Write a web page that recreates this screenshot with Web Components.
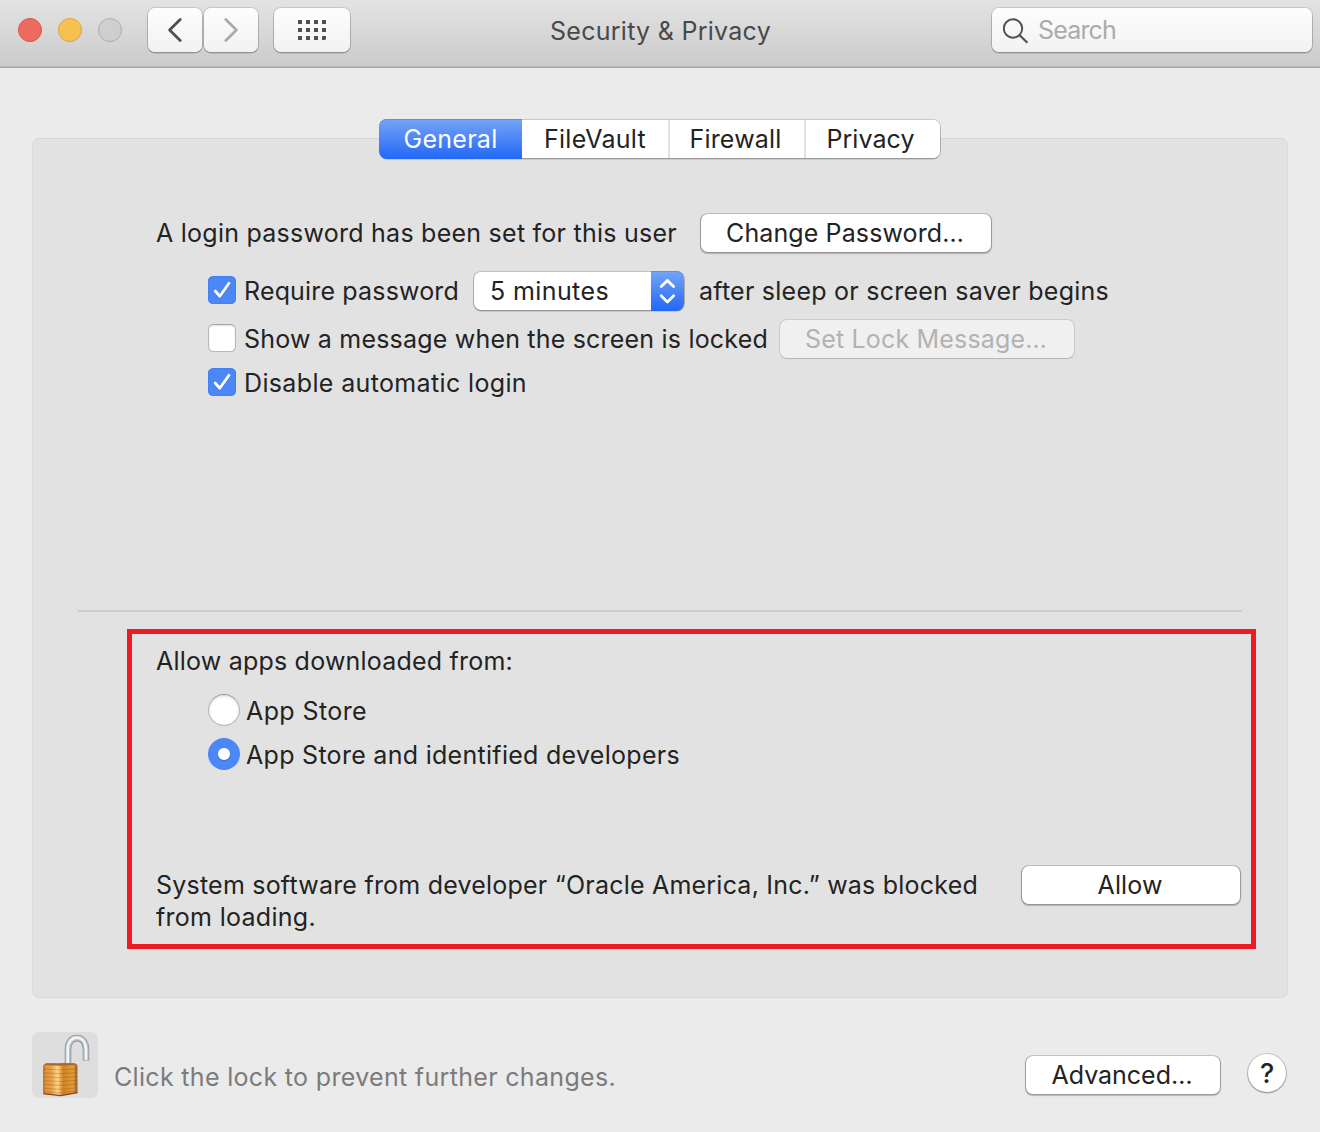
<!DOCTYPE html>
<html lang="en">
<head>
<meta charset="utf-8">
<title>Security &amp; Privacy</title>
<style>
html, body { margin: 0; height: 1132px; overflow: hidden; }
body { background: #ebebeb; color: #232323; font: 25px/30px Inter, "Liberation Sans", sans-serif; }
</style>
</head>
<body>
<pref-window></pref-window>
<script>
function define(name, html, setup) {
  const template = document.createElement('template');
  template.innerHTML = html;
  customElements.define(name, class extends HTMLElement {
    constructor() {
      super();
      this.attachShadow({ mode: 'open' }).appendChild(template.content.cloneNode(true));
    }
    connectedCallback() { if (setup) setup(this, this.shadowRoot); }
  });
}

/* One line of text, tracked so that it fills the width given in "w". */
define('fit-text', `<style>
:host { display: block; flex: none; line-height: 30px; height: 30px; }
span { display: block; width: max-content; white-space: nowrap; }
</style><span><slot></slot></span>`, (el, root) => {
  const w = parseFloat(el.getAttribute('w'));
  const span = root.querySelector('span');
  span.style.letterSpacing = '0px';
  const spacing = (w - span.getBoundingClientRect().width) / el.textContent.length;
  span.style.letterSpacing = spacing.toFixed(3) + 'px';
  el.style.width = w + 'px';
});

define('traffic-lights', `
<style>
:host { display: flex; gap: 16px; }
i { box-sizing: border-box; width: 24px; height: 24px; border-radius: 50%; border: 1px solid #d9534a; background: #ed6b60; }
i:nth-of-type(2) { background: #f6c150; border-color: #dea33b; }
i:nth-of-type(3) { background: #cfcfcf; border-color: #adadad; }
</style><i></i><i></i><i></i>`);

define('tool-button', `
<style>
:host { display: flex; align-items: center; justify-content: center; box-sizing: border-box; width: 54px; height: 44px; border-radius: 7px;
  background: linear-gradient(#fdfdfd, #f2f2f2); box-shadow: 0 0 0 1px rgba(0,0,0,.11), 0 1px 0 .5px rgba(0,0,0,.2); }
:host([wide]) { width: 76px; }
</style><slot></slot>`);

define('search-field', `
<style>
:host { display: flex; align-items: center; box-sizing: border-box; width: 320px; height: 44px; padding-left: 11px; gap: 8px; border-radius: 7px; color: #ababab;
  background: linear-gradient(#fdfdfd, #f2f2f2); box-shadow: 0 0 0 1px rgba(0,0,0,.11), 0 1px 0 .5px rgba(0,0,0,.2); }
svg { display: block; margin-top: 2px; }
</style>
<svg width="27" height="27" viewBox="0 0 27 27" fill="none" stroke="#505050"><circle cx="10" cy="10.5" r="9.2" stroke-width="1.9"/><path d="M16.7 17.2L24.4 24.7" stroke-width="2.2"/></svg>
<slot></slot>`);

define('title-bar', `
<style>
:host { display: grid; grid-template-columns: 1fr auto 1fr; box-sizing: border-box; height: 68px; padding: 8px 8px 0 18px; background: linear-gradient(#e3e3e3, #cbcbcb); border-bottom: 1px solid #a4a4a4; box-shadow: inset 0 -1px #b9b9b9; }
.left { display: flex; height: 44px; align-items: center; }
.nav { display: flex; gap: 2px; margin: 0 16px 0 26px; }
.title { padding: 8px 0 0 0; margin-left: -9px; color: #494949; }
search-field { justify-self: end; }
svg { display: block; }
</style>
<div class="left">
  <traffic-lights></traffic-lights>
  <div class="nav">
    <tool-button><svg width="54" height="44" viewBox="0 0 54 44" fill="none" stroke="#505050" stroke-width="2.8" stroke-linecap="round" stroke-linejoin="round"><path d="M32.2 11.5L21.6 22l10.6 10.5"/></svg></tool-button>
    <tool-button><svg width="54" height="44" viewBox="0 0 54 44" fill="none" stroke="#ababab" stroke-width="2.8" stroke-linecap="round" stroke-linejoin="round"><path d="M21.8 11.5L32.4 22 21.8 32.5"/></svg></tool-button>
  </div>
  <tool-button wide><svg width="28" height="20" viewBox="0 0 28 20" fill="#505050"><path d="M0 0h4v4H0zM8 0h4v4H8zM16 0h4v4h-4zM24 0h4v4h-4zM0 8h4v4H0zM8 8h4v4H8zM16 8h4v4h-4zM24 8h4v4h-4zM0 16h4v4H0zM8 16h4v4H8zM16 16h4v4h-4zM24 16h4v3l-1 1h-3z"/></svg></tool-button>
</div>
<div class="title"><fit-text w="221">Security &amp; Privacy</fit-text></div>
<search-field><fit-text w="78">Search</fit-text></search-field>`);

define('tab-item', `
<style>
:host { display: flex; align-items: center; justify-content: center; box-sizing: border-box; height: 38px; background: #fff; border-left: 2px solid #e2e2e2; padding-right: 3px; }
:host(.first) { border-left: 0; padding: 0; }
:host(.last) { padding-right: 5px; }
:host([selected]) { padding: 0; color: #fff; border: 0; height: 40px; margin: -1px 0 -1px -1px; border-radius: 8px 0 0 8px; background: linear-gradient(#76a5f6, #2267f6); box-shadow: inset 0 1px #5a8ef0; }
</style><slot></slot>`, el => { el.style.width = el.getAttribute('size') + 'px'; });

define('tab-bar', `
<style>
:host { display: flex; width: 560px; border-radius: 7px; background: #fff; box-shadow: 0 0 0 1px rgba(0,0,0,.15), 0 1px 0 .5px rgba(0,0,0,.2); }
tab-item:last-of-type { border-radius: 0 7px 7px 0; }
</style>
<tab-item selected size="143"><fit-text w="94">General</fit-text></tab-item>
<tab-item class="first" size="146"><fit-text w="102">FileVault</fit-text></tab-item>
<tab-item size="136"><fit-text w="92">Firewall</fit-text></tab-item>
<tab-item class="last" size="136"><fit-text w="88">Privacy</fit-text></tab-item>`);

define('push-button', `
<style>
:host { display: flex; flex: none; align-items: center; justify-content: center; box-sizing: border-box; height: 38px; padding-right: 2px; border-radius: 7px; background: #fff; color: #232323;
  box-shadow: 0 0 0 1px rgba(0,0,0,.15), 0 1px 1px .5px rgba(0,0,0,.22); }
:host([disabled]) { color: #b2b2b2; background: #f0f0f0; box-shadow: 0 0 0 1px rgba(0,0,0,.1), 0 1px 1px rgba(0,0,0,.1); }
:host([round]) { height: 38px; padding: 2px 0 0; border-radius: 50%; font-size: 27px; font-weight: 500; }
</style><slot></slot>`, el => { el.style.width = el.getAttribute('size') + 'px'; });

define('check-box', `
<style>
:host { display: flex; flex: none; align-items: center; height: 30px; gap: 8px; }
i { display: block; box-sizing: border-box; width: 28px; height: 28px; margin-top: -2px; border-radius: 5.5px; background: #fff; border: 1px solid #b9b9b9; border-top-color: #a3a3a3; box-shadow: inset 0 1px 2px rgba(0,0,0,.12); }
svg { display: none; }
:host([checked]) i { border: 0; background: #4b87f6; box-shadow: inset 0 0 0 1px #4480f0; }
:host([checked]) svg { display: block; }
</style>
<i><svg width="28" height="28" viewBox="0 0 28 28" fill="none" stroke-linecap="round" stroke-linejoin="round"><path d="M7.2 15.9L11.8 21 21 8.2" stroke="#2f67cf" stroke-opacity=".4" stroke-width="2.8"/><path d="M7.2 15L11.8 20.2 21 7.3" stroke="#fff" stroke-width="2.8"/></svg></i><slot></slot>`);

define('radio-button', `
<style>
:host { display: flex; align-items: center; height: 32px; gap: 6px; }
i { display: flex; align-items: center; justify-content: center; box-sizing: border-box; width: 32px; height: 32px; border-radius: 50%; background: #fff; border: 1px solid #b6b6b6; border-top-color: #9d9d9d; box-shadow: inset 0 1px 3px rgba(0,0,0,.16); }
:host([checked]) i { border: 0; background: #4b87f6; box-shadow: none; }
:host([checked]) i::after { content: ""; width: 11.5px; height: 11.5px; border-radius: 50%; background: #fff; box-shadow: 0 1px 1px rgba(20,60,160,.4); }
slot { display: block; padding-top: 2px; }
</style><i></i><slot></slot>`);

define('popup-select', `
<style>
:host { display: flex; flex: none; align-items: center; justify-content: space-between; box-sizing: border-box; width: 209.5px; height: 38px; padding-left: 16px; border-radius: 7px; background: #fff;
  box-shadow: 0 0 0 1px rgba(0,0,0,.15), 0 1px 0 .5px rgba(0,0,0,.22); }
b { height: 40px; width: 33px; margin: -1px -.5px -1px 0; border-radius: 0 8px 8px 0; background: linear-gradient(#76a5f6, #2267f6); box-shadow: inset 0 1px #5a8ef0; }
svg { display: block; }
</style><slot></slot>
<b><svg width="33" height="40" viewBox="0 0 33 40" fill="none" stroke="#fff" stroke-width="2.8" stroke-linecap="round" stroke-linejoin="round"><path d="M10.2 15.6l6.2-6.2 6.2 6.2M10.2 24.8l6.2 6.1 6.2-6.1"/></svg></b>`);

define('lock-icon', `
<style>
:host { display: block; flex: none; width: 66px; height: 66px; border-radius: 7px; background: #dedede; }
svg { display: block; }
</style>
<svg width="66" height="66" viewBox="0 0 66 66">
<defs>
<linearGradient id="brass" x2="1"><stop stop-color="#a96420"/><stop offset=".06" stop-color="#dc9137"/><stop offset=".25" stop-color="#e7a349"/><stop offset=".42" stop-color="#ffd68b"/><stop offset=".5" stop-color="#edaf58"/><stop offset=".58" stop-color="#d18428"/><stop offset=".88" stop-color="#e39b3c"/><stop offset="1" stop-color="#95591f"/></linearGradient>
</defs>
<path d="M36 34V18C36 9.8 40 6.1 45 6.1S54 10.2 54 18v10.5" fill="none" stroke="#87949a" stroke-width="6.6"/>
<path d="M36 34V18C36 9.8 40 6.1 45 6.1S54 10.2 54 18v9.9" fill="none" stroke="#b7c2c6" stroke-width="5"/>
<path d="M35.7 34V18C35.7 9.4 40 5.6 45 5.6S53.8 9.8 54 18v9.8" fill="none" stroke="#eff4f5" stroke-width="2.6"/>
<path d="M11.2 33.2L14.3 31h28L45.4 33V60.8L28.2 63.8 11.2 62z" fill="url(#brass)"/>
<path d="M11.8 32.9l2.8-1.7h27.5l2.8 1.6-17 1z" fill="#a8682a"/>
<g fill="none" stroke="#925010" stroke-opacity=".3" stroke-width="1.1"><path d="M11.5 37.3l17 .5 17-.7M11.5 41l17 .6 17-.8M11.5 44.9l17 .6 17-.9M11.5 48.7l17 .8 17-1.1M11.5 52.4l17 1 17-1.3M11.5 56.2l17 1.2 17-1.6M11.5 59.5l17 1.4 17-2"/></g>
<path d="M11.5 61.7l17 1.9 17-3" fill="none" stroke="#804616" stroke-width="1.2"/>
</svg>`);

define('general-pane', `
<style>
:host { display: flex; flex-direction: column; box-sizing: border-box; width: 1256px; height: 860px; border-radius: 8px; background: #e2e2e2; border: 1px solid #dadada; border-top-color: #d3d3d3; }
tab-bar { align-self: center; margin: -19px 0 55px; height: 38px; }
.row { display: flex; align-items: center; height: 40px; }
.login { padding-left: 123px; gap: 24px; margin-bottom: 18px; }
.opt { padding-left: 175px; }
.require { margin-bottom: 8px; }
.require popup-select { margin: 0 15.5px 0 15px; }
.message { margin-bottom: 9px; }
.message push-button { margin-left: 12px; }
.auto { height: 30px; }
hr { flex: none; align-self: center; width: 1164px; height: 2px; border: 0; margin: 212px 0 17px; background: #cdcdcd; }
.downloads { box-sizing: border-box; width: 1129px; height: 320px; margin-left: 94px; padding: 12px 11px 0 24px; border: 5px solid #ed1c24; }
.radios { display: flex; flex-direction: column; gap: 12px; padding: 18px 0 100px 52px; }
.blocked { display: flex; justify-content: space-between; }
.blocked fit-text + fit-text { margin-top: 2px; }
.blocked push-button { margin-top: -4px; }
</style>
<tab-bar></tab-bar>
<div class="row login"><fit-text w="521">A login password has been set for this user</fit-text><push-button size="290"><fit-text w="238">Change Password…</fit-text></push-button></div>
<div class="row opt require"><check-box checked><fit-text w="215">Require password</fit-text></check-box><popup-select><fit-text w="119">5 minutes</fit-text></popup-select><fit-text w="410">after sleep or screen saver begins</fit-text></div>
<div class="row opt message"><check-box><fit-text w="524">Show a message when the screen is locked</fit-text></check-box><push-button size="294" disabled><fit-text w="242">Set Lock Message…</fit-text></push-button></div>
<div class="row opt auto"><check-box checked><fit-text w="283">Disable automatic login</fit-text></check-box></div>
<hr>
<div class="downloads">
  <fit-text w="357">Allow apps downloaded from:</fit-text>
  <div class="radios">
    <radio-button><fit-text w="121">App Store</fit-text></radio-button>
    <radio-button checked><fit-text w="434">App Store and identified developers</fit-text></radio-button>
  </div>
  <div class="blocked">
    <div><fit-text w="822">System software from developer “Oracle America, Inc.” was blocked</fit-text><fit-text w="160">from loading.</fit-text></div>
    <push-button size="218"><fit-text w="65">Allow</fit-text></push-button>
  </div>
</div>`);

define('pref-footer', `
<style>
:host { display: flex; align-items: flex-start; margin: 34px 34px 0 32px; height: 66px; }
.hint { margin: 30px auto 0 16px; color: #7b7b7b; }
.actions { display: flex; align-items: center; gap: 28px; padding-top: 20px; }
.actions push-button:first-child { margin-top: 4px; }
</style>
<lock-icon></lock-icon>
<div class="hint"><fit-text w="502">Click the lock to prevent further changes.</fit-text></div>
<div class="actions"><push-button size="194"><fit-text w="141">Advanced…</fit-text></push-button><push-button round size="38">?</push-button></div>`);

define('pref-window', `
<style>
:host { display: block; width: 1320px; height: 1132px; background: #ebebeb; }
general-pane { margin: 70px 32px 0; }
</style>
<title-bar></title-bar><general-pane></general-pane><pref-footer></pref-footer>`);
</script>
</body>
</html>
